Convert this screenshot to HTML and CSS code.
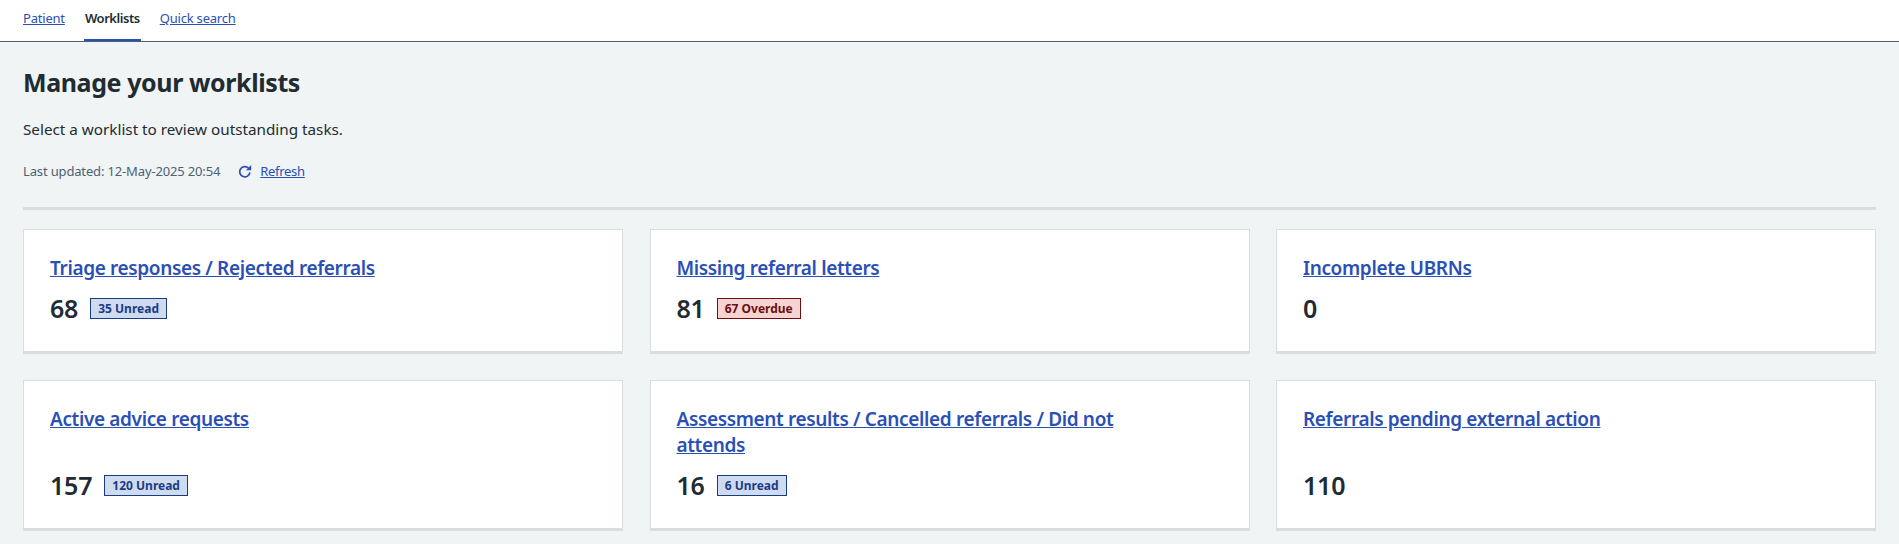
FILE: index.html
```html
<!DOCTYPE html>
<html lang="en">
<head>
<meta charset="utf-8">
<title>Manage your worklists</title>
<link rel="stylesheet" href="styles.css">
</head>
<body>
<nav class="tabs">
  <a class="tab" href="#">Patient</a>
  <span class="tab tab-active">Worklists</span>
  <a class="tab" href="#">Quick search</a>
</nav>
<main class="content">
  <h1 class="title">Manage your worklists</h1>
  <p class="lead">Select a worklist to review outstanding tasks.</p>
  <div class="meta">
    <span class="updated">Last updated: 12-May-2025 20:54</span>
    <a class="refresh" href="#">
      <svg class="refresh-icon" viewBox="0 0 14 14" aria-hidden="true"><path d="M11.9 8.4A5.1 5.1 0 1 1 10.5 4.2" fill="none" stroke="currentColor" stroke-width="1.7"/><path d="M13.2 1V6.2H8z" fill="currentColor"/></svg>
      <span class="refresh-label">Refresh</span>
    </a>
  </div>
  <hr class="rule">
  <section class="grid">
    <article class="card">
      <a class="card-title" href="#">Triage responses / Rejected referrals</a>
      <div class="stat"><span class="count">68</span><span class="badge badge-blue">35 Unread</span></div>
    </article>
    <article class="card">
      <a class="card-title" href="#">Missing referral letters</a>
      <div class="stat"><span class="count">81</span><span class="badge badge-red">67 Overdue</span></div>
    </article>
    <article class="card">
      <a class="card-title" href="#">Incomplete UBRNs</a>
      <div class="stat"><span class="count">0</span></div>
    </article>
    <article class="card">
      <a class="card-title" href="#">Active advice requests</a>
      <div class="stat"><span class="count">157</span><span class="badge badge-blue">120 Unread</span></div>
    </article>
    <article class="card">
      <a class="card-title" href="#">Assessment results / Cancelled referrals / Did not attends</a>
      <div class="stat"><span class="count">16</span><span class="badge badge-blue">6 Unread</span></div>
    </article>
    <article class="card">
      <a class="card-title" href="#">Referrals pending external action</a>
      <div class="stat"><span class="count">110</span></div>
    </article>
  </section>
</main>
</body>
</html>
```
FILE: styles.css
```css
* { box-sizing: border-box; }
html, body { margin: 0; height: 100%; }
body {
  background: #f0f4f5;
  color: #212b32;
  font-family: "Noto Sans", "Open Sans", sans-serif;
  overflow: hidden;
}
a { color: #2a4fb5; }
.tabs {
  display: flex;
  gap: 20px;
  height: 42px;
  padding-left: 23px;
  background: #fff;
  border-bottom: 1px solid #4c6272;
  font-size: 13px;
  line-height: 37px;
  letter-spacing: -0.2px;
}
.tab { display: block; height: 41px; }
.tab-active {
  font-weight: 600;
  letter-spacing: -0.45px;
  border-bottom: 2px solid #2a4fb5;
  padding: 0 1px;
  margin: 0 -1px;
}
.content { padding: 0 23px; }
.title {
  margin: 25px 0 0;
  font-size: 25px;
  line-height: 30px;
  font-weight: 700;
  letter-spacing: -0.4px;
}
.lead {
  margin: 22px 0 0;
  font-size: 15.25px;
  line-height: 20px;
}
.meta {
  display: flex;
  align-items: center;
  margin-top: 22px;
  height: 20px;
  font-size: 13px;
}
.updated { color: #4c6272; letter-spacing: -0.15px; }
.refresh { display: flex; align-items: center; margin-left: 18px; letter-spacing: -0.3px; }
.refresh-icon { width: 14px; height: 14px; margin-right: 8px; }
.rule {
  margin: 26px 0 19px;
  border: 0;
  height: 3px;
  background: #d8dde0;
}
.grid {
  display: grid;
  grid-template-columns: repeat(3, 1fr);
  gap: 26px 26.5px;
}
.card {
  display: flex;
  flex-direction: column;
  align-items: flex-start;
  padding: 25px 25px 27px 26px;
  background: #fff;
  border: 1px solid #d8dde0;
  border-bottom-width: 3px;
}
.card-title {
  max-width: 85%;
  font-size: 19px;
  line-height: 26px;
  font-weight: 600;
  letter-spacing: -0.36px;
}
.stat {
  display: flex;
  align-items: center;
  gap: 12px;
  margin-top: auto;
  padding-top: 11px;
}
.count {
  font-size: 25px;
  line-height: 32px;
  font-weight: 600;
  letter-spacing: -0.2px;
}
.badge {
  padding: 0 7px;
  font-size: 12px;
  line-height: 19px;
  font-weight: 700;
  border: 1px solid;
}
.badge-blue { color: #1c3b85; background: #cfdcf0; border-color: #1c3b85; }
.badge-red { color: #6b0f0f; background: #f7d4d1; border-color: #6b0f0f; }
```
